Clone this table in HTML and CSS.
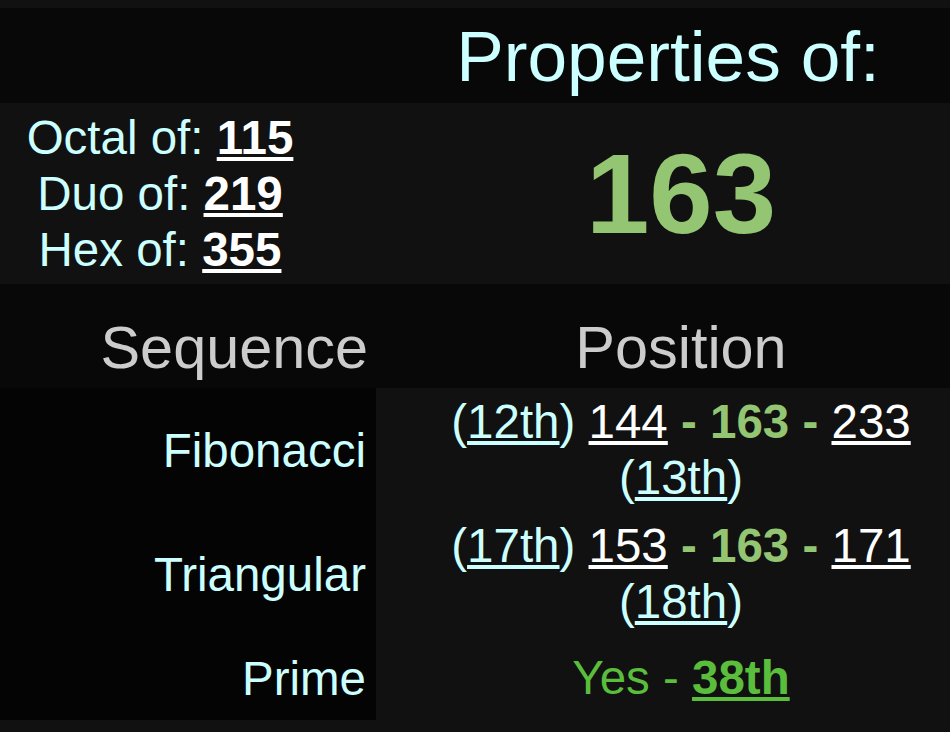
FILE: index.html
```html
<!DOCTYPE html>
<html lang="en">
<head>
<meta charset="utf-8">
<title>Properties of 163</title>
<link rel="stylesheet" href="styles.css">
</head>
<body>
<main class="page">
  <section class="row row-title">
    <div class="cell"></div>
    <h1 class="cell title">Properties of:</h1>
  </section>
  <section class="row row-number">
    <div class="cell bases">
      <div>Octal of: <a class="link-num" href="#">115</a></div>
      <div>Duo of: <a class="link-num" href="#">219</a></div>
      <div>Hex of: <a class="link-num" href="#">355</a></div>
    </div>
    <div class="cell number">163</div>
  </section>
  <section class="row row-head">
    <div class="cell head-seq">Sequence</div>
    <div class="cell head-pos">Position</div>
  </section>
  <section class="row seq seq-tall">
    <div class="cell seq-name">Fibonacci</div>
    <div class="cell seq-pos"><p class="pos-text">(<a class="link-ord" href="#">12th</a>) <a class="link-val" href="#">144</a><b class="cur"> - 163 - </b><a class="link-val" href="#">233</a> (<a class="link-ord" href="#">13th</a>)</p></div>
  </section>
  <section class="row seq seq-tall">
    <div class="cell seq-name">Triangular</div>
    <div class="cell seq-pos"><p class="pos-text">(<a class="link-ord" href="#">17th</a>) <a class="link-val" href="#">153</a><b class="cur"> - 163 - </b><a class="link-val" href="#">171</a> (<a class="link-ord" href="#">18th</a>)</p></div>
  </section>
  <section class="row seq seq-short">
    <div class="cell seq-name">Prime</div>
    <div class="cell seq-pos"><p class="pos-text prime">Yes - <a class="link-prime" href="#">38th</a></p></div>
  </section>
</main>
</body>
</html>
```
FILE: styles.css
```css
html, body {
  background: #111111;
}
body {
  margin: 8px 0 0;
  font-family: "Liberation Sans", Arial, sans-serif;
  color: #ccffff;
}
.page {
  display: flex;
  flex-direction: column;
}
.row {
  display: grid;
  grid-template-columns: 376px 574px;
}
.row-title {
  background: #080808;
  height: 95px;
  align-items: center;
}
.title {
  margin: 0;
  font-size: 71.25px;
  font-weight: normal;
  color: #ccffff;
  text-align: center;
  padding-left: 10px;
}
.row-number {
  height: 181px;
  align-items: center;
  background: #111111;
}
.bases {
  text-align: center;
  padding-right: 56px;
  font-size: 47.5px;
  line-height: 56px;
  color: #ccffff;
}
.link-num {
  color: #ffffff;
  font-weight: bold;
}
.number {
  font-size: 114px;
  font-weight: bold;
  color: #93c572;
  text-align: center;
  padding-left: 36px;
}
.row-head {
  background: #080808;
  height: 104px;
  align-items: end;
  padding-bottom: 6px;
  box-sizing: border-box;
  font-size: 59.4px;
  color: #cccccc;
}
.head-seq {
  text-align: right;
  padding-right: 8px;
}
.head-pos {
  text-align: center;
  padding-left: 36px;
}
.seq {
  font-size: 47.5px;
}
.seq-tall {
  height: 124px;
}
.seq-short {
  height: 84px;
}
.seq-name {
  background: #040404;
  display: flex;
  align-items: center;
  justify-content: flex-end;
  padding-right: 10px;
  color: #ccffff;
}
.seq-pos {
  background: #111111;
  display: flex;
  align-items: center;
  justify-content: center;
  padding-left: 36px;
}
.pos-text {
  margin: 0;
  text-align: center;
  line-height: 56px;
  color: #ccffff;
}
.link-ord {
  color: #ccffff;
}
.link-val {
  color: #ffffff;
}
.cur {
  color: #93c572;
}
.prime {
  color: #5abd3c;
}
.link-prime {
  color: #5abd3c;
  font-weight: bold;
}
```
